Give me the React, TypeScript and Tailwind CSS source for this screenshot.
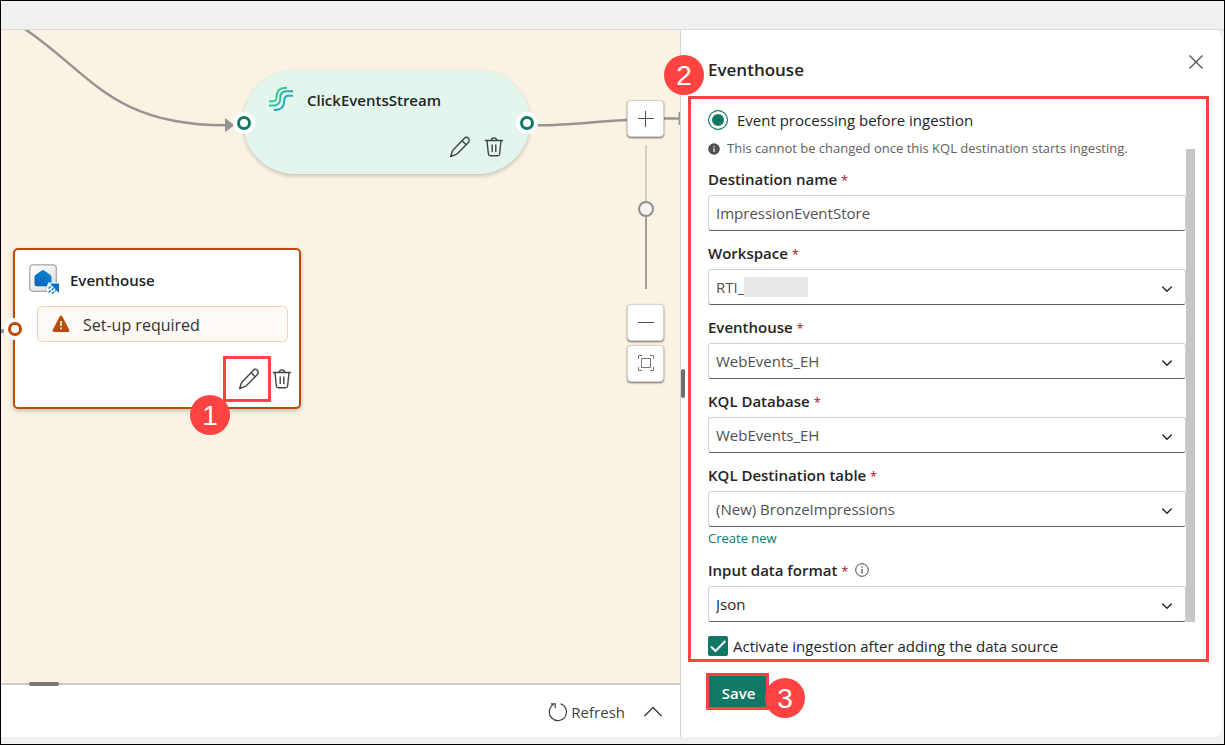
import type { ReactNode } from "react";

function PencilIcon() {
  return (
    <svg viewBox="0 0 22 22" className="size-[22px]" fill="none" stroke="currentColor" strokeWidth="1.4" strokeLinejoin="round">
      <path d="M15.200 2.400a2.900 2.900 0 0 1 4.200 4.100L8 17.900a3 3 0 0 1-1.200.8L1.600 20.500l1.700-5.300a3 3 0 0 1 .8-1.300z" />
      <path d="M13 4.700l4.100 4.100" />
    </svg>
  );
}

function TrashIcon() {
  return (
    <svg viewBox="0 0 22 22" className="size-[22px]" fill="none" stroke="currentColor" strokeWidth="1.4" strokeLinecap="round">
      <path d="M2.500 4.500h17M8.400 4.300a2.600 2.400 0 0 1 5.200 0M4 4.800l1.400 13.200a2 2 0 0 0 2 1.800h7.200a2 2 0 0 0 2-1.800L18 4.800M9.200 9v6.500M12.800 9v6.500" />
    </svg>
  );
}

function StreamIcon() {
  return (
    <svg viewBox="0 0 26 26" className="size-[26px]" fill="none" strokeWidth="1.900">
      <defs>
        <linearGradient id="streamTop" x1="0" y1="14" x2="19" y2="0" gradientUnits="userSpaceOnUse">
          <stop offset="0" stopColor="#35c98c" />
          <stop offset="1" stopColor="#3cc488" />
        </linearGradient>
        <linearGradient id="streamMid" x1="0" y1="0" x2="25" y2="0" gradientUnits="userSpaceOnUse">
          <stop offset="0.1" stopColor="#2fc59a" />
          <stop offset="1" stopColor="#22a8b8" />
        </linearGradient>
        <linearGradient id="streamLow" x1="5" y1="23" x2="25" y2="8" gradientUnits="userSpaceOnUse">
          <stop offset="0" stopColor="#1f9fb5" />
          <stop offset="1" stopColor="#25aebb" />
        </linearGradient>
      </defs>
      <path stroke="url(#streamTop)" d="M1 14.300h4c2.500 0 3.500-1.500 3.500-4.300C8.500 4 12 .9 17.500.9H19" />
      <path stroke="url(#streamMid)" d="M1 18.500h4.500c4.500 0 6.800-2.800 6.800-7.500 0-4.500 2.200-6.700 6.200-6.700H25" />
      <path stroke="url(#streamLow)" d="M6 23h1c6 0 9.300-3.500 9.300-9.500 0-3.500 1.200-4.800 4.200-4.800H25" />
    </svg>
  );
}

function EventhouseIcon() {
  return (
    <svg viewBox="0 0 31 31" className="size-[31px]" fill="none">
      <defs>
        <linearGradient id="tile" x1="0" y1="0" x2="1" y2="1">
          <stop offset="0" stopColor="#fff" />
          <stop offset="1" stopColor="#dcdcdc" />
        </linearGradient>
        <linearGradient id="house" x1="0" y1="1" x2="1" y2="0">
          <stop offset="0" stopColor="#0a62b0" />
          <stop offset="1" stopColor="#0a8ad8" />
        </linearGradient>
      </defs>
      <rect x="0.800" y="0.800" width="26.500" height="26.500" rx="3" fill="url(#tile)" stroke="#a3a3a3" strokeWidth="1.200" />
      <path fill="url(#house)" d="M12.800 6.500a1.800 1.800 0 0 1 2.400 0l6.300 4.600a2.500 2.500 0 0 1 1 2V20a2.300 2.300 0 0 1-2.300 2.300H7.800A2.300 2.300 0 0 1 5.500 20v-6.900a2.500 2.500 0 0 1 1-2z" />
      <path fill="#fff" d="M19.500 18.500H31V31H18v-9.500z" />
      <path fill="#0a6fc0" d="M21 19.500h9V29z" />
      <path stroke="#0a78c8" strokeWidth="1.400" d="M19.500 24.500l3.500-3M19.500 28.500l6-5M23 29.800l4.500-4" strokeDasharray="3 .9" />
    </svg>
  );
}

function ChevronDown() {
  return (
    <svg viewBox="0 0 12 12" className="pointer-events-none absolute top-3.5 right-[13px] size-3 text-[#242424]" fill="none" stroke="currentColor" strokeWidth="1.400" strokeLinecap="round" strokeLinejoin="round">
      <path d="M1.700 4L6 8.300 10.300 4" />
    </svg>
  );
}

function Port({ className, ring }: { className: string; ring: string }) {
  return (
    <span className={`absolute flex size-[22px] items-center justify-center rounded-full bg-white ${className}`}>
      <span className={`size-3.5 rounded-full border-[3px] bg-white ${ring}`} />
    </span>
  );
}

function Step({ n, className }: { n: number; className: string }) {
  return (
    <span className={`absolute z-20 flex size-10 items-center justify-center rounded-full bg-[#ff4343] pt-0.5 font-['Liberation_Sans',sans-serif] text-[28px] leading-none text-white ${className}`}>
      {n}
    </span>
  );
}

function Field({ id, label, children, extra }: { id: string; label: string; children: ReactNode; extra?: ReactNode }) {
  return (
    <div>
      <div className="mb-1 flex h-6 items-center">
        <label htmlFor={id} className="text-[15px] leading-6 font-semibold">
          {label} <span className="text-[13px] font-normal text-[#b10e1c]">*</span>
        </label>
        {extra}
      </div>
      <div className="relative">{children}</div>
    </div>
  );
}

const box =
  "block h-9 w-full appearance-none rounded-[3px] border border-[#d1d1d1] border-b-[#616161] bg-white px-[7px] text-[15px] leading-6 outline-none";

function SelectField({ id, label, value, cover, extra, dark }: { id: string; label: string; value: string; cover?: boolean; extra?: ReactNode; dark?: boolean }) {
  return (
    <Field id={id} label={label} extra={extra}>
      <select id={id} defaultValue={value} className={`${box} ${dark ? "text-[#242424]" : "text-[#505050]"}`}>
        <option>{value}</option>
      </select>
      {cover && <span className="absolute top-2 left-9 h-5 w-16 bg-[#e8e8e8]" />}
      <ChevronDown />
    </Field>
  );
}

const zoomButton =
  "flex size-[37px] items-center justify-center rounded-[4px] border border-[#d6d2ca] bg-white text-[#505050] shadow-[0_1px_2px_rgba(0,0,0,0.55)]";

function Canvas() {
  return (
    <div className="relative flex-1 overflow-hidden bg-[#faf2e2]">
      <svg className="absolute top-0 left-0 h-full w-full" viewBox="1 30 679 653" preserveAspectRatio="xMinYMin slice" fill="none" stroke="#979593" strokeWidth="2.500">
        <path d="M22 27C90 72 110 125.300 226 125.300" />
        <path d="M225 118l9.500 7.300-9.500 7z" fill="#979593" stroke="none" />
        <path d="M538 125.300c32 0 58-4 92-5.500M663 118.500h17" />
        <path d="M679.300 112v13" strokeWidth="1.500" />
        <path d="M0 331h4" strokeWidth="4" />
      </svg>

      <div className="absolute top-10 left-[242px] h-[104px] w-[287px] rounded-full bg-[#e2f6ee] shadow-[0_2px_4px_rgba(0,0,0,0.2)]">
        <div className="flex items-center gap-[13px] pt-4 pl-[25px]">
          <StreamIcon />
          <span className="text-[15px] leading-7 font-semibold text-[#242424]">ClickEventsStream</span>
        </div>
        <div className="flex justify-end gap-3 pt-[22px] pr-[25px] text-[#424242]">
          <button type="button" aria-label="Edit stream"><PencilIcon /></button>
          <button type="button" aria-label="Delete stream"><TrashIcon /></button>
        </div>
        <Port className="top-[42px] -left-[10px]" ring="border-[#117865]" />
        <Port className="top-[42px] -right-[8px]" ring="border-[#117865]" />
      </div>

      <div className="absolute top-[218px] left-3 h-[161px] w-72 rounded-[5px] border-2 border-[#bc4b09] bg-white shadow-[0_2px_4px_rgba(0,0,0,0.2)]">
        <div className="flex items-center gap-2.5 pt-3.5 pl-3.5">
          <EventhouseIcon />
          <span className="text-[15px] leading-7 font-semibold text-[#242424]">Eventhouse</span>
        </div>
        <div className="mt-[11px] mr-[11px] ml-[22px] flex h-9 items-center gap-[13px] rounded-[5px] border border-[#fdcfb4] bg-[#fff9f5] px-3.5">
          <svg viewBox="0 0 18 18" className="size-[18px]" fill="#bc4b09">
            <path d="M7.800 1.300a1.400 1.400 0 0 1 2.400 0l7 13.500a1.400 1.400 0 0 1-1.200 2.100H2A1.400 1.400 0 0 1 .8 14.800z" />
            <path d="M8.200 6h1.600v5H8.200zM8.200 12.500h1.600v1.700H8.200z" fill="#fff" />
          </svg>
          <span className="pt-0.5 text-base leading-6 text-[#323232]">Set-up required</span>
        </div>
        <div className="flex justify-end pt-3.5 pr-1.5 text-[#424242]">
          <button type="button" aria-label="Edit destination" className="flex h-[46px] w-12 items-center justify-center border-[3px] border-[#ff4343] pl-1"><PencilIcon /></button>
          <button type="button" aria-label="Delete destination"><TrashIcon /></button>
        </div>
        <Port className="top-[68px] -left-[11px]" ring="border-[#bc4b09]" />
      </div>
      <Step n={1} className="top-[365px] left-[189px]" />

      <div className="absolute top-[70px] right-4 flex flex-col items-center">
        <button type="button" aria-label="Zoom in" className={zoomButton}>
          <svg viewBox="0 0 18 18" className="size-[18px]" stroke="currentColor"><path d="M8.500 1v16M1 8.500h16" /></svg>
        </button>
        <input
          type="range"
          aria-label="Zoom level"
          min={0}
          max={100}
          defaultValue={56}
          className="mt-2 mb-[15px] h-36 w-4 appearance-none bg-[linear-gradient(#d2cdc1_0_45%,#a39c92_45%)] bg-[length:2px_100%] bg-center bg-no-repeat [direction:rtl] [writing-mode:vertical-lr] [&::-webkit-slider-thumb]:size-4 [&::-webkit-slider-thumb]:appearance-none [&::-webkit-slider-thumb]:rounded-full [&::-webkit-slider-thumb]:border-2 [&::-webkit-slider-thumb]:border-solid [&::-webkit-slider-thumb]:border-[#8f8f8f] [&::-webkit-slider-thumb]:bg-[#f3f3f3]"
        />
        <button type="button" aria-label="Zoom out" className={`${zoomButton} mb-1`}>
          <svg viewBox="0 0 18 18" className="size-[18px]" stroke="currentColor"><path d="M1 8.500h16" /></svg>
        </button>
        <button type="button" aria-label="Fit to view" className={zoomButton}>
          <svg viewBox="0 0 18 18" className="size-[18px]" fill="none" stroke="#777">
            <path d="M4.500 3.500h9v9h-9zM1.500 4V.5H5M13 .5h3.500V4M16.500 12v3.500H13M5 15.500H1.500V12" />
          </svg>
        </button>
      </div>
    </div>
  );
}

function Panel() {
  return (
    <aside className="relative flex w-[542px] shrink-0 flex-col rounded-r-lg border-l border-[#d6d6d6] bg-white pr-[13px] pl-[7px]">
      <span className="absolute top-[339px] left-0 h-[29px] w-1 rounded-sm bg-[#6e6e6e]" />
      <Step n={2} className="top-[25px] -left-[17px]" />
      <header className="flex h-[66px] justify-between pt-6 pr-[5px] pl-5">
        <h2 className="pt-0.5 text-[17px] leading-7 font-semibold">Eventhouse</h2>
        <button type="button" aria-label="Close" className="h-4 text-[#505050]">
          <svg viewBox="0 0 16 16" className="size-4" stroke="currentColor" strokeWidth="1.300"><path d="M1.500 1.500l13 13M14.500 1.500l-13 13" /></svg>
        </button>
      </header>

      <form id="destination" className="border-[3px] border-[#ff4343] pt-[11px] pr-[11px] pb-[3px] pl-[17px]">
        <div className="flex">
          <div className="min-w-0 flex-1">
            <label className="flex h-5 items-center gap-[9px] text-[15px]">
              <input type="radio" defaultChecked className="size-5 appearance-none rounded-full border border-[#117865] bg-[#117865] shadow-[inset_0_0_0_3px_white]" />
              Event processing before ingestion
            </label>
            <p className="mt-[9px] flex h-5 items-center gap-[7px] text-[13px] text-[#616161]">
              <svg viewBox="0 0 12 12" className="size-3"><circle cx="6" cy="6" r="5.800" fill="#505050" /><path d="M5.400 5.200h1.200V9H5.400zM5.400 3h1.200v1.200H5.400z" fill="#fff" /></svg>
              This cannot be changed once this KQL destination starts ingesting.
            </p>
            <div className="mt-2 flex flex-col gap-2.5">
              <Field id="name" label="Destination name">
                <input id="name" defaultValue="ImpressionEventStore" className={`${box} text-[#505050]`} />
              </Field>
              <SelectField id="workspace" label="Workspace" value="RTI_" cover />
              <SelectField id="eventhouse" label="Eventhouse" value="WebEvents_EH" />
              <SelectField id="database" label="KQL Database" value="WebEvents_EH" />
              <div>
                <SelectField id="table" label="KQL Destination table" value="(New) BronzeImpressions" />
                <a href="#create" className="flex h-[21px] items-end text-[13px] leading-5 text-[#117865]">Create new</a>
              </div>
              <SelectField
                id="format"
                label="Input data format"
                value="Json"
                dark
                extra={
                  <svg viewBox="0 0 14 14" className="ml-[7px] size-3.5" fill="none" stroke="#424242"><circle cx="7" cy="7" r="6.300" /><path d="M7 6v4.500M7 3.500v1.300" strokeWidth="1.200" /></svg>
                }
              />
            </div>
          </div>
          <div className="mt-[39px] w-[9px] bg-[#c6c6c6]" />
        </div>
        <label className="mt-3.5 flex h-5 items-center gap-[5px] text-[15px]">
          <span className="relative size-5">
            <input type="checkbox" defaultChecked className="block size-5 appearance-none rounded-[2px] bg-[#117865]" />
            <svg viewBox="0 0 20 20" className="pointer-events-none absolute inset-0" fill="none" stroke="#fff" strokeWidth="2"><path d="M3 10.500l4.500 4.500L17.300 5" /></svg>
          </span>
          Activate ingestion after adding the data source
        </label>
      </form>

      <div className="relative mt-[11px] ml-[18px] flex">
        <button type="submit" form="destination" className="h-[37px] w-[63px] border-[3px] border-[#ff4343] bg-[#117865] pt-1 pl-0.5 text-[15px] font-semibold text-white">Save</button>
        <Step n={3} className="top-[5px] left-[59px]" />
      </div>
    </aside>
  );
}

export default function App() {
  return (
    <div className="flex min-h-screen flex-col border border-black bg-[#f0f0f0] pr-0.5 pb-[7px] font-['Open_Sans','Noto_Sans',sans-serif] text-[#242424]">
      <div className="-mr-0.5 h-[29px] border-b border-[#dcdcdc]" />
      <main className="flex flex-1">
        <section className="flex min-w-0 flex-1 flex-col">
          <Canvas />
          <footer className="relative flex h-[54px] items-center justify-end gap-[18px] border-t-2 border-[#cccccc] bg-white pt-0.5 pr-[17px] text-[#424242]">
            <span className="absolute -top-[3px] left-7 h-1 w-[30px] rounded-sm bg-[#787572]" />
            <button type="button" className="flex items-center gap-[3px] text-[15px]">
              <svg viewBox="0 0 20 20" className="size-5" fill="none" stroke="currentColor" strokeWidth="1.200">
                <path d="M12.500 1.800A8.600 8.600 0 1 1 5.500 2.600M3 1.800h4.200v4.400" />
              </svg>
              Refresh
            </button>
            <button type="button" aria-label="Expand">
              <svg viewBox="0 0 20 20" className="size-5" fill="none" stroke="currentColor" strokeWidth="1.500"><path d="M1.500 14L10 5.500l8.500 8.500" /></svg>
            </button>
          </footer>
        </section>
        <Panel />
      </main>
    </div>
  );
}
